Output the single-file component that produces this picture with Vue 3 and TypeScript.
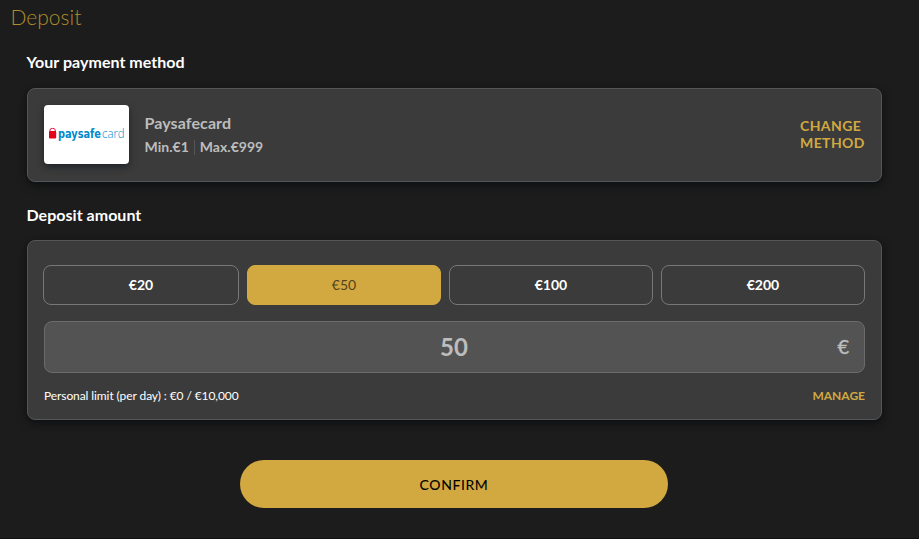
<script setup lang="ts">
import { ref } from 'vue'

const presets: number[] = [20, 50, 100, 200]
const amount = ref<number>(50)
</script>

<template>
  <main class="deposit">
    <h1 class="title">Deposit</h1>
    <div class="content">
      <h2 class="heading">Your payment method</h2>
      <section class="card method">
        <div class="logo">
          <svg width="85" height="59" viewBox="0 0 85 59" aria-label="paysafecard">
            <path d="M6 26.5V25Q6 23.4 8.6 23.4Q11.2 23.4 11.2 25V26.5" fill="none" stroke="#e2103c" stroke-width="1" />
            <rect x="5" y="26" width="7.2" height="7.4" rx="1" fill="#e2001a" />
            <text x="14" y="33.2" textLength="43" lengthAdjust="spacingAndGlyphs" class="brand-bold">paysafe</text>
            <text x="58" y="33.2" textLength="22.6" lengthAdjust="spacingAndGlyphs" class="brand-light">card</text>
          </svg>
        </div>
        <div class="details">
          <div class="name">Paysafecard</div>
          <div class="limits"><span>Min.€1</span><i class="divider"></i><span>Max.€999</span></div>
        </div>
        <a class="change">CHANGE METHOD</a>
      </section>

      <h2 class="heading second">Deposit amount</h2>
      <section class="card amount-card">
        <div class="presets">
          <button
            v-for="value in presets"
            :key="value"
            class="preset"
            :class="{ selected: value === amount }"
            @click="amount = value"
          >€{{ value }}</button>
        </div>
        <div class="field">
          <span class="value">{{ amount }}</span>
          <span class="currency">€</span>
        </div>
        <div class="footer">
          <span class="personal">Personal limit (per day) : €0 / €10,000</span>
          <a class="manage">MANAGE</a>
        </div>
      </section>
    </div>
    <button class="confirm">CONFIRM</button>
  </main>
</template>

<style>
body {
  background: #1c1c1c;
}
</style>

<style scoped>
.deposit {
  box-sizing: border-box;
  width: 919px;
  height: 539px;
  overflow: hidden;
  background: #1c1c1c;
  border-bottom: 1px solid #111;
  font-family: Lato, "Liberation Sans", sans-serif;
  color: #fff;
}
.title {
  margin: 0;
  padding: 5px 0 1px 10.5px;
  font-size: 21px;
  line-height: 24px;
  font-weight: 300;
  color: #b08c2d;
}
.content {
  width: 855px;
  margin-left: 27px;
}
.heading {
  margin: 22px 0 16px -0.5px;
  font-size: 16px;
  line-height: 20px;
  font-weight: 700;
  letter-spacing: 0.03px;
}
.heading.second {
  margin: 23px 0 15px -0.5px;
}
.card {
  box-sizing: border-box;
  background: #3b3b3b;
  border: 1px solid #545657;
  border-radius: 8px;
  box-shadow: 0 3px 8px rgba(4, 8, 12, 0.65);
}
.method {
  display: flex;
  height: 94px;
  padding: 16px;
  align-items: flex-start;
}
.logo {
  width: 85px;
  height: 59px;
  background: #fff;
  border-radius: 4px;
  box-shadow: 0 3px 7px rgba(15, 20, 30, 0.65);
}
.logo svg {
  display: block;
}
.brand-bold {
  font-family: "DejaVu Sans", sans-serif;
  font-weight: 700;
  font-size: 12.5px;
  fill: #0089cb;
}
.brand-light {
  font-family: "Open Sans", sans-serif;
  font-weight: 300;
  font-size: 13px;
  fill: #0089cb;
}
.details {
  flex: 1;
  padding: 8px 0 0 15.5px;
  color: #bdbdbd;
  font-weight: 700;
}
.name {
  font-size: 16px;
  line-height: 20px;
  letter-spacing: 0.1px;
}
.limits {
  display: flex;
  align-items: center;
  margin-top: 4px;
  font-size: 14px;
  line-height: 20px;
  letter-spacing: 0.02px;
}
.divider {
  width: 1px;
  height: 15px;
  margin: 0 5px;
  background: #555;
}
.change {
  width: 65px;
  padding-top: 12px;
  font-size: 14px;
  line-height: 17px;
  font-weight: 700;
  letter-spacing: 0.4px;
  color: #d2a941;
}
.amount-card {
  height: 180px;
  padding: 24px 16px 0;
}
.presets {
  display: grid;
  grid-template-columns: 196fr 194fr 204fr 204fr;
  gap: 8px;
  margin-left: -1px;
}
.preset {
  box-sizing: border-box;
  height: 40px;
  padding: 0;
  background: transparent;
  border: 1px solid #777;
  border-radius: 8px;
  color: #fff;
  font: 700 14px/20px Lato, sans-serif;
}
.preset.selected {
  background: #d2a941;
  border-color: #d2a941;
  color: #54441a;
  font-weight: 400;
}
.field {
  box-sizing: border-box;
  display: grid;
  grid-template-columns: 1fr auto 1fr;
  align-items: center;
  height: 52px;
  margin-top: 16px;
  padding: 0 15px 2px 14px;
  background: #535353;
  border: 1px solid #6b6b6b;
  border-radius: 8px;
  color: #bdbdbd;
  font-weight: 700;
}
.value {
  grid-column: 2;
  font-size: 24px;
}
.currency {
  justify-self: end;
  font-size: 20px;
  font-weight: 400;
  -webkit-text-stroke: 0.4px #bdbdbd;
}
.footer {
  display: flex;
  justify-content: space-between;
  margin-top: 13px;
  font-size: 12px;
  line-height: 20px;
}
.personal {
  letter-spacing: -0.09px;
}
.manage {
  font-weight: 700;
  color: #d2a941;
}
.confirm {
  display: block;
  width: 428px;
  height: 48px;
  margin: 40px 0 0 240px;
  padding: 2px 0 0;
  border: 0;
  border-radius: 24px;
  background: #d2a941;
  color: #000;
  font: 400 14px/20px Lato, sans-serif;
  letter-spacing: 0.6px;
  -webkit-text-stroke: 0.1px #000;
}
</style>
